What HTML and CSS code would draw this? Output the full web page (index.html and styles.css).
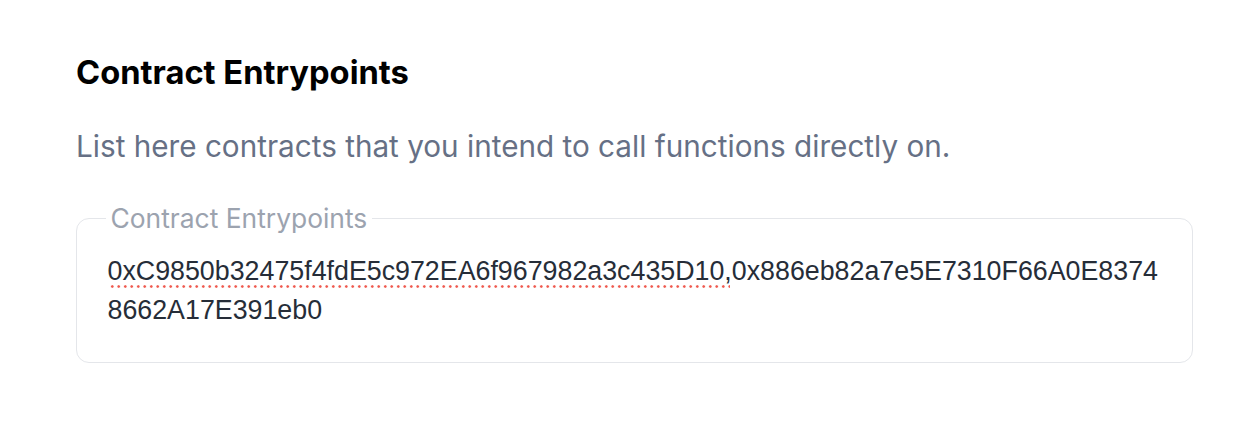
FILE: index.html
```html
<!DOCTYPE html>
<html>
<head>
<meta charset="utf-8">
<link rel="stylesheet" href="styles.css">
</head>
<body>
<section class="panel">
  <h2 class="title">Contract Entrypoints</h2>
  <p class="desc">List here contracts that you intend to call functions directly on.</p>
  <fieldset class="field">
    <legend class="legend">Contract Entrypoints</legend>
    <div class="value"><span class="misspelt">0xC9850b32475f4fdE5c972EA6f967982a3c435D10</span>,0x886eb82a7e5E7310F66A0E8374<br>8662A17E391eb0</div>
  </fieldset>
</section>
</body>
</html>
```

FILE: styles.css
```css
html, body {
  margin: 0;
  padding: 0;
  background: #ffffff;
}
.panel {
  padding: 52px 0 0 76px;
  font-family: Inter, "Liberation Sans", sans-serif;
}
.title {
  margin: 0;
  font-size: 32.7px;
  font-weight: 700;
  color: #000000;
  line-height: 40px;
}
.desc {
  margin: 36px 0 0 0;
  font-size: 29.7px;
  line-height: 36px;
  color: #667085;
}
.field {
  margin: 39px 0 0 0;
  width: 1117px;
  box-sizing: border-box;
  border: 1.5px solid #e4e6ea;
  border-radius: 13px;
  padding: 19px 30px 33px 30.5px;
}
.legend {
  padding: 0 5px;
  margin-left: -2px;
  font-size: 26.4px;
  line-height: 30px;
  color: #9ca3af;
}
.value {
  font-family: "Liberation Sans", Arial, sans-serif;
  font-size: 26.8px;
  line-height: 38.5px;
  color: #262d38;
  white-space: nowrap;
}
.misspelt {
  padding-bottom: 2px;
  padding-right: 6px;
  background-image: radial-gradient(circle, #ef5a4f 1.1px, rgba(239, 90, 79, 0) 1.5px);
  background-size: 6.5px 3px;
  background-repeat: repeat-x;
  background-position: 1px bottom;
  margin-right: -6px;
}
```
